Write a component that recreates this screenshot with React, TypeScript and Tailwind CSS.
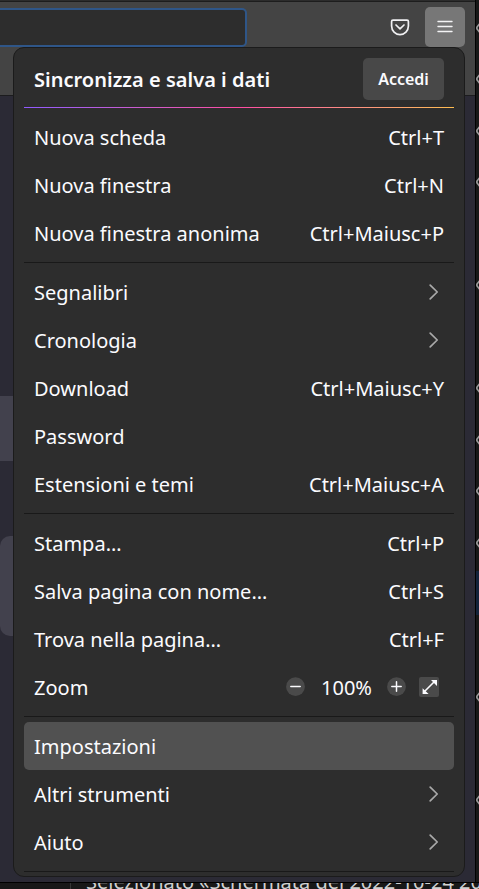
import React from "react";

type Entry = { label: string; hint?: string; arrow?: boolean; active?: boolean };

const tabs: Entry[] = [
  { label: "Nuova scheda", hint: "Ctrl+T" },
  { label: "Nuova finestra", hint: "Ctrl+N" },
  { label: "Nuova finestra anonima", hint: "Ctrl+Maiusc+P" },
];
const library: Entry[] = [
  { label: "Segnalibri", arrow: true },
  { label: "Cronologia", arrow: true },
  { label: "Download", hint: "Ctrl+Maiusc+Y" },
  { label: "Password" },
  { label: "Estensioni e temi", hint: "Ctrl+Maiusc+A" },
];
const page: Entry[] = [
  { label: "Stampa…", hint: "Ctrl+P" },
  { label: "Salva pagina con nome…", hint: "Ctrl+S" },
  { label: "Trova nella pagina…", hint: "Ctrl+F" },
];
const tools: Entry[] = [
  { label: "Impostazioni", active: true },
  { label: "Altri strumenti", arrow: true },
  { label: "Aiuto", arrow: true },
];

const fileRows = [1, 1, 1, 1, 0, 1, 0, 1, 1, 1, 1, 2, 0, 1, 0, 1, 0];

function Row({ label, hint, arrow, active }: Entry) {
  return (
    <div className={`flex h-12 items-center justify-between rounded-[5px] px-2.5 ${active ? "bg-[#515151]" : ""}`}>
      <span>{label}</span>
      {hint && <span>{hint}</span>}
      {arrow && (
        <svg className="mr-1" width="12" height="16" viewBox="0 0 12 16" fill="none" stroke="#a9a9a9" strokeWidth="1.7" strokeLinecap="round" strokeLinejoin="round">
          <path d="M2.2 1.2 9.2 8l-7 6.8" />
        </svg>
      )}
    </div>
  );
}

function Rows({ items }: { items: Entry[] }) {
  return <>{items.map((i) => <Row key={i.label} {...i} />)}</>;
}

function Menu() {
  return (
    <div className="absolute top-[47px] left-[13px] flex h-[830px] w-[452px] flex-col rounded-[11px] border border-[#1b1b1b] bg-[#2d2d2d] px-2.5 text-[20px] leading-[27px] text-[#fbfbfe]">
      <div className="mt-2.5 flex h-[42px] items-center justify-between px-2.5">
        <span className="font-semibold tracking-[0.02px]">Sincronizza e salva i dati</span>
        <button className="h-[42px] w-[81px] rounded-[5px] bg-[#484848] text-[16px] font-semibold">Accedi</button>
      </div>
      <div className="mt-[7px] mb-[5px] h-px bg-linear-to-r from-[#9059ff] via-[#ff4aa2] to-[#ffbd4f]" />
      <Rows items={tabs} />
      <div className="my-[5px] h-px bg-[#191919]" />
      <Rows items={library} />
      <div className="my-[5px] h-px bg-[#191919]" />
      <Rows items={page} />
      <div className="flex h-12 items-center px-2.5">
        <span className="flex-1">Zoom</span>
        <svg width="20" height="20" viewBox="0 0 20 20">
          <circle cx="9.5" cy="9.7" r="9.4" fill="#4a4a4a" />
          <path d="M4.8 9.5h9.4" stroke="#fbfbfe" strokeWidth="1.5" strokeLinecap="round" />
        </svg>
        <span className="w-[81px] text-center">100%</span>
        <svg width="20" height="20" viewBox="0 0 20 20">
          <circle cx="9.5" cy="9.7" r="9.4" fill="#4a4a4a" />
          <path d="M4.8 9.5h9.4M9.5 4.8v9.4" stroke="#fbfbfe" strokeWidth="1.5" strokeLinecap="round" />
        </svg>
        <svg className="mr-[5px] ml-3" width="20" height="20" viewBox="0 0 20 20">
          <rect width="20" height="20" rx="2" fill="#4a4a4a" />
          <path d="M5 15 16 4" stroke="#fbfbfe" strokeWidth="1.6" />
          <path d="M12 3h6v6zM3.6 11.2V17H9.6z" fill="#fbfbfe" />
        </svg>
      </div>
      <div className="my-[5px] h-px bg-[#191919]" />
      <Rows items={tools} />
      <div className="mt-[5px] h-px bg-[#191919]" />
    </div>
  );
}

export default function App() {
  return (
    <div className="relative flex h-[889px] w-[479px] flex-col overflow-hidden bg-[#181818] font-['Noto_Sans','Open_Sans',sans-serif]">
      <div className="flex h-[882px] shrink-0">
        <div className="flex w-[475px] shrink-0 flex-col bg-[#2b2a35]">
          <div className="flex h-24 items-start border-t border-b border-t-[#2c2c2c] border-b-[#1c1c1e] bg-[#444444]">
            <div className="h-full w-full border-t border-[#1d1d1d]">
              <div className="flex items-start pt-[5px]">
                <div className="mt-px h-[39px] w-[247px] rounded-r-[5px] border-2 border-l-0 border-[#2f5688] bg-[#2d2d2d]" />
                <svg className="mt-3 ml-[143px]" width="20" height="18" viewBox="0 0 20 18" fill="none" stroke="#f0f0f2" strokeWidth="1.7" strokeLinecap="round" strokeLinejoin="round">
                  <path d="M3 1.2h14c.8 0 1.4.6 1.4 1.4V7c0 4.8-3.8 8.6-8.4 8.6S1.6 11.8 1.6 7V2.6c0-.8.6-1.4 1.4-1.4Z" />
                  <path d="m6 6 4 3.8L14 6" />
                </svg>
                <div className="ml-[15px] h-10 w-10 rounded-[5px] bg-[#777777]">
                  <svg width="40" height="40" viewBox="0 0 40 40" stroke="#f4f4f5" strokeWidth="1.4" strokeLinecap="round">
                    <path d="M13 14.5h14M13 19.5h14M13 24.5h14" />
                  </svg>
                </div>
              </div>
            </div>
          </div>
          <div className="mt-[300px] h-[65px] w-5 bg-[#42414d]" />
          <div className="mt-[75px] h-[100px] w-10 rounded-l-[10px] bg-[#42414d]" />
        </div>
        <div className="w-px shrink-0 bg-[#020202]" />
        <div className="w-[3px] shrink-0 overflow-hidden pt-[2px]">
          {fileRows.map((kind, i) => (
            <div key={i} className={`flex h-[51.5px] w-3 items-center ${kind === 2 ? "bg-[#14233a] bg-clip-content pt-[2px] pb-[5px]" : ""}`}>
              {kind === 1 && (
                <svg className="shrink-0" width="8" height="14" viewBox="0 0 8 14" fill="none" stroke="#a0a0a0" strokeWidth="1.6">
                  <path d="M5 1 .9 6.2v1.6L5 13" />
                </svg>
              )}
            </div>
          ))}
        </div>
      </div>
      <div className="flex h-[7px] shrink-0 overflow-hidden border-t border-black">
        <div className="w-[71px] shrink-0 border-r border-[#363636]" />
        <div className="-mt-[15px] ml-[15px] text-[20px] leading-[27px] whitespace-nowrap text-[#d0d0d0]">Selezionato «Schermata del 2022-10-24 20</div>
      </div>
      <Menu />
    </div>
  );
}
